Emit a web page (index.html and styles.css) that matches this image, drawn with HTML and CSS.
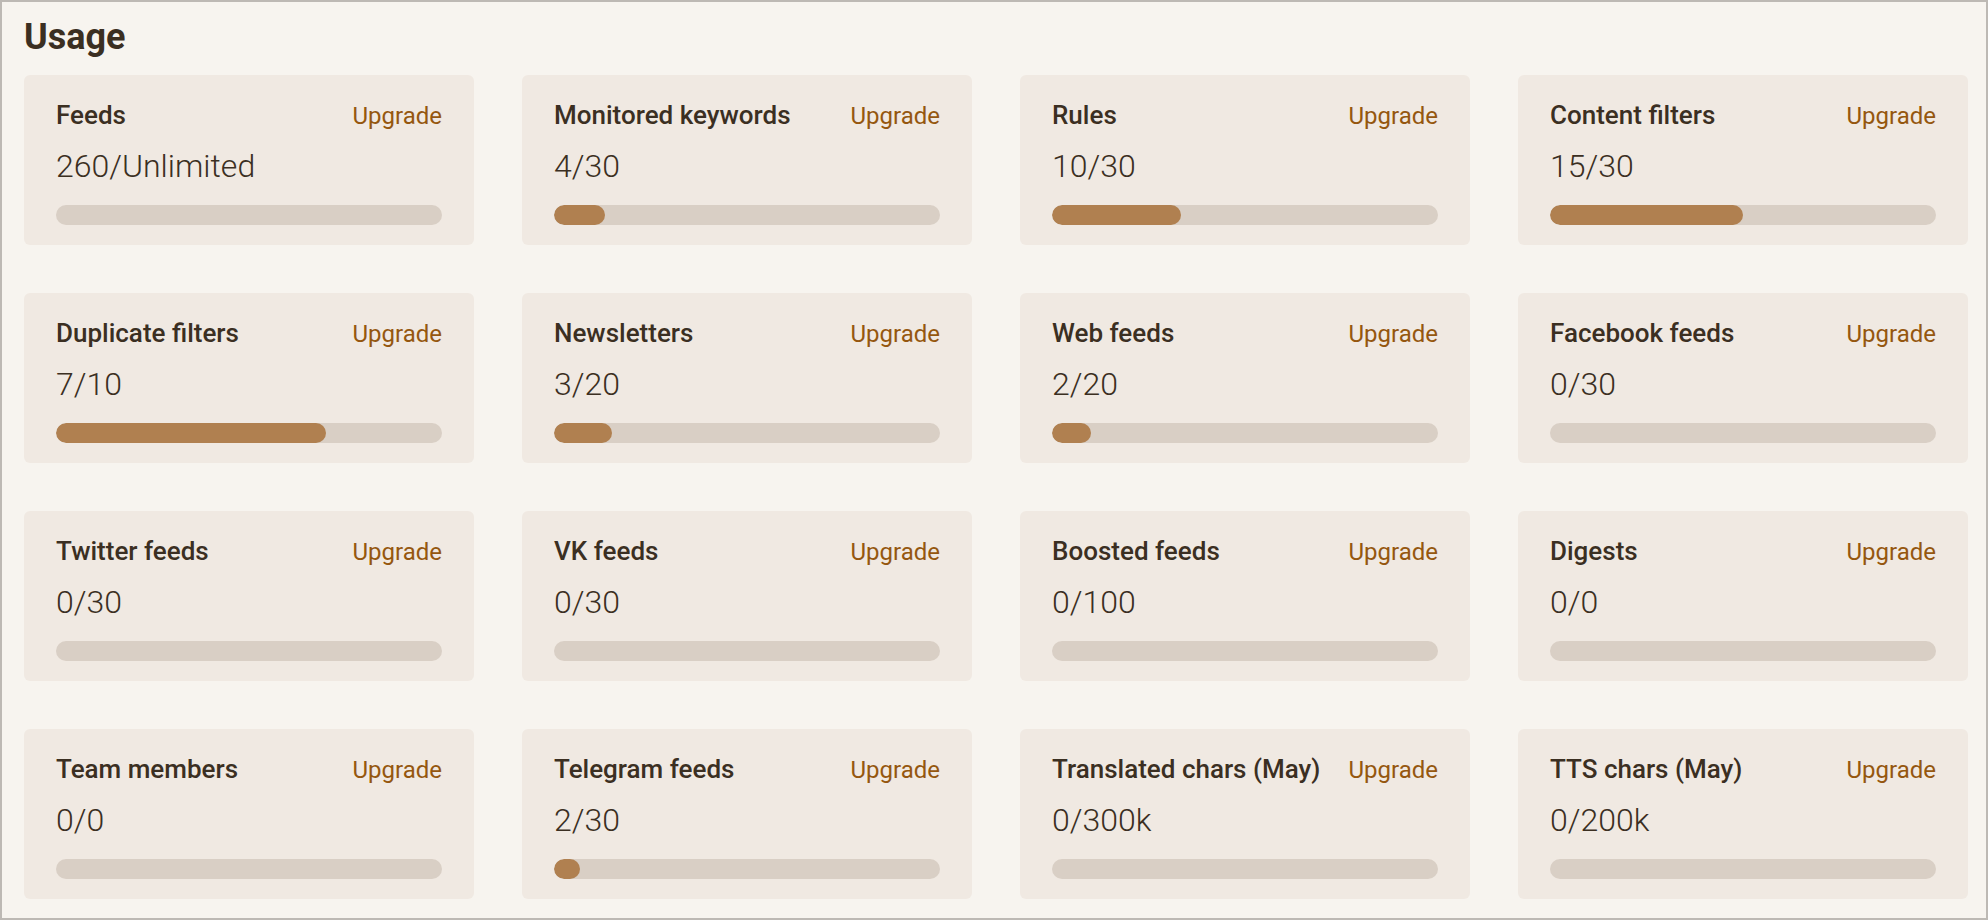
FILE: index.html
```html
<!DOCTYPE html>
<html lang="en">
<head>
<meta charset="utf-8">
<title>Usage</title>
<link rel="stylesheet" href="styles.css">
</head>
<body>
<div class="frame">
  <h1 class="heading">Usage</h1>
  <div class="grid">
    <div class="card"><div class="card-head"><span class="card-title">Feeds</span><a class="upgrade">Upgrade</a></div><div class="card-value">260/Unlimited</div><div class="bar"><div class="fill" style="width:0%"></div></div></div>
    <div class="card"><div class="card-head"><span class="card-title">Monitored keywords</span><a class="upgrade">Upgrade</a></div><div class="card-value">4/30</div><div class="bar"><div class="fill" style="width:13.33%"></div></div></div>
    <div class="card"><div class="card-head"><span class="card-title">Rules</span><a class="upgrade">Upgrade</a></div><div class="card-value">10/30</div><div class="bar"><div class="fill" style="width:33.33%"></div></div></div>
    <div class="card"><div class="card-head"><span class="card-title">Content filters</span><a class="upgrade">Upgrade</a></div><div class="card-value">15/30</div><div class="bar"><div class="fill" style="width:50%"></div></div></div>

    <div class="card"><div class="card-head"><span class="card-title">Duplicate filters</span><a class="upgrade">Upgrade</a></div><div class="card-value">7/10</div><div class="bar"><div class="fill" style="width:70%"></div></div></div>
    <div class="card"><div class="card-head"><span class="card-title">Newsletters</span><a class="upgrade">Upgrade</a></div><div class="card-value">3/20</div><div class="bar"><div class="fill" style="width:15%"></div></div></div>
    <div class="card"><div class="card-head"><span class="card-title">Web feeds</span><a class="upgrade">Upgrade</a></div><div class="card-value">2/20</div><div class="bar"><div class="fill" style="width:10%"></div></div></div>
    <div class="card"><div class="card-head"><span class="card-title">Facebook feeds</span><a class="upgrade">Upgrade</a></div><div class="card-value">0/30</div><div class="bar"><div class="fill" style="width:0%"></div></div></div>

    <div class="card"><div class="card-head"><span class="card-title">Twitter feeds</span><a class="upgrade">Upgrade</a></div><div class="card-value">0/30</div><div class="bar"><div class="fill" style="width:0%"></div></div></div>
    <div class="card"><div class="card-head"><span class="card-title">VK feeds</span><a class="upgrade">Upgrade</a></div><div class="card-value">0/30</div><div class="bar"><div class="fill" style="width:0%"></div></div></div>
    <div class="card"><div class="card-head"><span class="card-title">Boosted feeds</span><a class="upgrade">Upgrade</a></div><div class="card-value">0/100</div><div class="bar"><div class="fill" style="width:0%"></div></div></div>
    <div class="card"><div class="card-head"><span class="card-title">Digests</span><a class="upgrade">Upgrade</a></div><div class="card-value">0/0</div><div class="bar"><div class="fill" style="width:0%"></div></div></div>

    <div class="card"><div class="card-head"><span class="card-title">Team members</span><a class="upgrade">Upgrade</a></div><div class="card-value">0/0</div><div class="bar"><div class="fill" style="width:0%"></div></div></div>
    <div class="card"><div class="card-head"><span class="card-title">Telegram feeds</span><a class="upgrade">Upgrade</a></div><div class="card-value">2/30</div><div class="bar"><div class="fill" style="width:6.67%"></div></div></div>
    <div class="card"><div class="card-head"><span class="card-title">Translated chars (May)</span><a class="upgrade">Upgrade</a></div><div class="card-value">0/300k</div><div class="bar"><div class="fill" style="width:0%"></div></div></div>
    <div class="card"><div class="card-head"><span class="card-title">TTS chars (May)</span><a class="upgrade">Upgrade</a></div><div class="card-value">0/200k</div><div class="bar"><div class="fill" style="width:0%"></div></div></div>
  </div>
</div>
</body>
</html>
```

FILE: styles.css
```css
* { box-sizing: border-box; }
html, body { margin: 0; padding: 0; }
body {
  font-family: Roboto, "Liberation Sans", sans-serif;
  background: #f7f4ef;
  color: #3b2f22;
}
.frame {
  width: 1988px;
  height: 920px;
  border: 2px solid #bdb9b4;
  background: #f7f4ef;
  padding: 15px 18px 0 22px;
  overflow: hidden;
}
.heading {
  margin: 0;
  font-size: 36px;
  line-height: 40px;
  font-weight: 700;
  color: #3b2f22;
}
.grid {
  margin-top: 18px;
  display: grid;
  grid-template-columns: repeat(4, 450px);
  column-gap: 48px;
  row-gap: 48px;
}
.card {
  background: #f0e9e2;
  border-radius: 6px;
  padding: 24px 32px 20px 32px;
  height: 170px;
}
.card-head {
  display: flex;
  justify-content: space-between;
  align-items: baseline;
  height: 32px;
  line-height: 32px;
}
.card-title {
  font-size: 26px;
  font-weight: 500;
  color: #3b2f22;
}
.upgrade {
  font-size: 24px;
  font-weight: 400;
  color: #95570f;
  cursor: pointer;
}
.card-value {
  margin-top: 15px;
  font-size: 32px;
  line-height: 40px;
  font-weight: 300;
  color: #3b2f22;
}
.bar {
  margin-top: 19px;
  height: 20px;
  border-radius: 10px;
  background: #d9cfc5;
  overflow: hidden;
}
.fill {
  height: 100%;
  border-radius: 10px;
  background: #b08050;
}
```
